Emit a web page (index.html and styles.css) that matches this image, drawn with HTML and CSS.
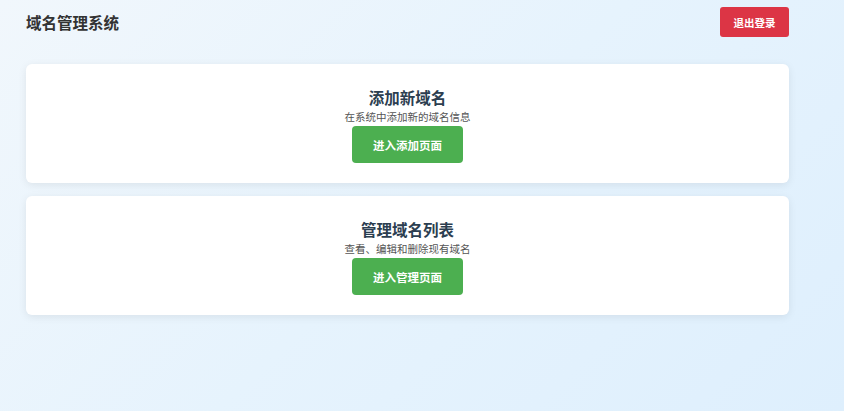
FILE: index.html
```html
<!DOCTYPE html>
<html lang="zh-CN">
<head>
<meta charset="utf-8">
<title>域名管理系统</title>
<link rel="stylesheet" href="styles.css">
</head>
<body>
<div class="container">
  <header class="header">
    <h1 class="brand">域名管理系统</h1>
    <button class="logout">退出登录</button>
  </header>
  <main class="cards">
    <section class="card">
      <h2 class="card-title">添加新域名</h2>
      <p class="card-desc">在系统中添加新的域名信息</p>
      <a class="card-btn" href="#">进入添加页面</a>
    </section>
    <section class="card">
      <h2 class="card-title">管理域名列表</h2>
      <p class="card-desc">查看、编辑和删除现有域名</p>
      <a class="card-btn" href="#">进入管理页面</a>
    </section>
  </main>
</div>
</body>
</html>
```
FILE: styles.css
```css
html, body {
  margin: 0;
  padding: 0;
  height: 100%;
}
body {
  font-family: "Noto Sans CJK SC", "Noto Sans", sans-serif;
  background: linear-gradient(135deg, #f1f7fc 0%, #e6f3fd 50%, #deeffd 100%);
  min-height: 411px;
}
.container {
  width: 763px;
  margin-left: 26px;
  padding-top: 7px;
}
.header {
  display: flex;
  justify-content: space-between;
  align-items: center;
  height: 30px;
}
.brand {
  margin: 0;
  font-size: 15.5px;
  font-weight: 700;
  color: #333;
  line-height: 30px;
}
.logout {
  width: 69px;
  height: 30px;
  border: none;
  border-radius: 3px;
  background: #dc3545;
  color: #fff;
  font-family: inherit;
  font-size: 10.5px;
  font-weight: 700;
  padding: 0;
  cursor: pointer;
}
.cards {
  margin-top: 27px;
  display: flex;
  flex-direction: column;
  gap: 13px;
}
.card {
  background: #fff;
  border-radius: 6px;
  box-shadow: 0 2px 8px rgba(0, 0, 0, 0.08);
  height: 119px;
  box-sizing: border-box;
  padding: 20px;
  display: flex;
  flex-direction: column;
  align-items: center;
}
.card-title {
  margin: 0;
  font-size: 15.5px;
  font-weight: 700;
  color: #2c3e50;
  line-height: 24px;
  padding-top: 1px;
}
.card-desc {
  margin: 0;
  font-size: 10.5px;
  color: #555;
  line-height: 16px;
}
.card-btn {
  margin-top: 1px;
  width: 111px;
  height: 37px;
  border-radius: 4px;
  background: #4caf50;
  color: #fff;
  font-size: 11.5px;
  font-weight: 700;
  text-decoration: none;
  display: flex;
  align-items: center;
  justify-content: center;
}
```
